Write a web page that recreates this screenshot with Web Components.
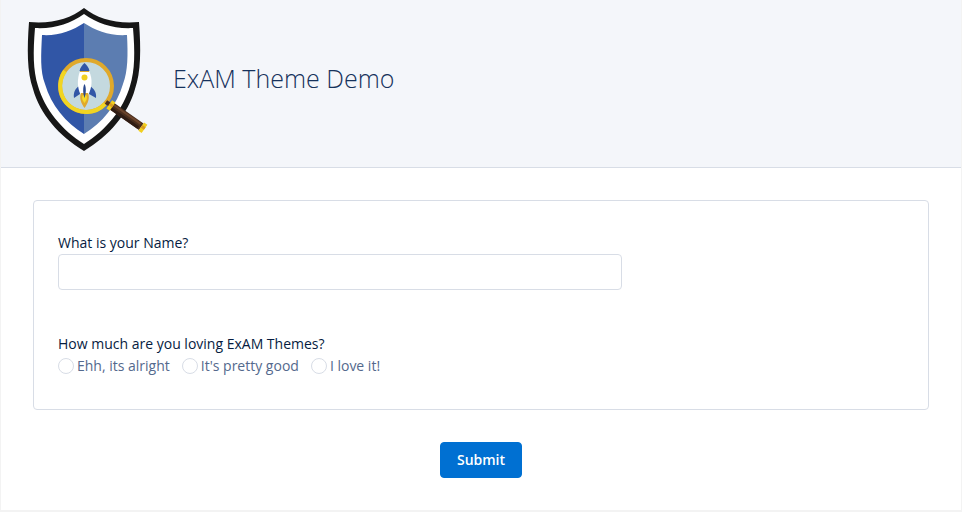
<!DOCTYPE html>
<html lang="en">
<head>
<meta charset="utf-8">
<meta name="viewport" content="width=device-width, initial-scale=1">
<title>ExAM Theme Demo</title>
<style>
  * {
    box-sizing: border-box;
  }

  body {
    margin: 0;
    padding: 0 1px 2px;
    background: #f3f3f3;
    color: #061c3f;
    font: 14px/20px "Open Sans", "Noto Sans", sans-serif;
  }
</style>
</head>
<body>

<exam-page>
  <exam-header slot="header" heading="ExAM Theme Demo">
    <exam-logo></exam-logo>
  </exam-header>
  <exam-panel>
    <exam-text-field label="What is your Name?" name="name"></exam-text-field>
    <exam-radio-group
      label="How much are you loving ExAM Themes?"
      name="rating"
      options="Ehh, its alright|It's pretty good|I love it!"
    ></exam-radio-group>
  </exam-panel>
  <exam-button slot="actions">Submit</exam-button>
</exam-page>

<script>
////////////////////
// Base element
////////////////////

class ExamElement extends HTMLElement {
  constructor() {
    super();
    this.attachShadow({ mode: "open" });
  }

  connectedCallback() {
    this.shadowRoot.innerHTML = `<style>
      *, *::before { box-sizing: border-box; }
      ${this.styles()}
    </style>${this.render()}`;
  }

  styles() {
    return "";
  }

  render() {
    return "<slot></slot>";
  }
}

////////////////////
// Page
////////////////////

class ExamPage extends ExamElement {
  styles() {
    return `
      :host {
        display: block;
        background: #fff;
      }
      main {
        padding: 32px;
      }
      .actions {
        display: flex;
        justify-content: center;
        padding-top: 32px;
      }
    `;
  }

  render() {
    return `
      <slot name="header"></slot>
      <main>
        <slot></slot>
        <div class="actions"><slot name="actions"></slot></div>
      </main>
    `;
  }
}

////////////////////
// Header
////////////////////

class ExamHeader extends ExamElement {
  styles() {
    return `
      :host {
        display: block;
        background: #f4f6fa;
        border-bottom: 1px solid #d8dde6;
      }
      header {
        display: flex;
        align-items: center;
        gap: 12px;
        padding: 0 20px 11px;
      }
      h1 {
        margin: 0;
        color: #16325c;
        font: 300 25px/32px "Open Sans", "Noto Sans", sans-serif;
      }
    `;
  }

  render() {
    return `
      <header>
        <slot></slot>
        <h1>${this.getAttribute("heading")}</h1>
      </header>
    `;
  }
}

////////////////////
// Logo, a shield with a rocket under a magnifying glass
////////////////////

class ExamLogo extends ExamElement {
  styles() {
    return `
      :host {
        display: block;
        flex: none;
      }
      svg {
        display: block;
      }
    `;
  }

  render() {
    return `
      <svg width="140" height="156" viewBox="21 0 140 156" aria-hidden="true">
        <path fill="#171717" d="M84 8C70 19 52 24 29 22C27 49 27 72 33 89C40 114 59 136 84 151C109 136 128 114 135 89C141 72 141 49 139 22C116 24 98 19 84 8Z"/>
        <path fill="#fff" d="M84 14C70 24 54 29 35 28C33 52 33 70 38 86C45 110 62 130 84 144C106 130 123 110 130 86C135 70 135 52 133 28C114 29 98 24 84 14Z"/>
        <path fill="#3156a6" d="M84 23C72 31 58 36 42 35C41 55 40 71 45 84C51 105 66 123 84 134Z"/>
        <path fill="#5c7db1" d="M84 23C96 31 110 36 127 35C128 55 128 71 123 84C117 105 102 123 84 134Z"/>
        <circle cx="86" cy="86" r="26" fill="#c4d9df" stroke="#e0a92b" stroke-width="4"/>
        <path fill="none" stroke="#f1d522" stroke-width="4" d="M65 71A26 26 0 0 0 105 104"/>
        <path fill="#3156a6" d="M79 86C76 88 73 92 74 98L80 94ZM90 86C93 88 97 92 96 98L89 94Z"/>
        <path fill="#fff" d="M80 71H89C93 79 92 88 88 95H81C77 88 77 79 80 71Z"/>
        <path fill="#3156a6" d="M84.500 63C82 65 80 68 79.500 71H89.500C89 68 87 65 84.500 63Z"/>
        <path stroke="#e0a92b" d="M80 71.500H89"/>
        <circle cx="84.500" cy="77.500" r="3" fill="#f1cf20"/>
        <path fill="#e0a92b" d="M81 93C79 98 81 103 84.500 108C88 103 90 98 88 93Z"/>
        <path fill="#f6dc28" d="M83 95C81 98 83 101 84.500 103C86 101 88 98 86 95Z"/>
        <path fill="#29478c" d="M84.500 84C82.500 87 83 94 84.500 98C86 94 86.500 87 84.500 84Z"/>
        <g transform="translate(106 102) rotate(35)">
          <path fill="#4a2e1d" d="M0 -2H5V2H0ZM6 -4H43V4H6Z"/>
          <path fill="#2f1c14" d="M8 1H41V4H8Z"/>
          <path fill="#6c442c" d="M8 -3H41V-1H8Z"/>
          <path fill="#f1cf20" d="M4 -5H8V5H4ZM43 -5H47V5H43Z"/>
          <path fill="#d99d20" d="M4 -2H8V1H4ZM43 -2H47V1H43Z"/>
        </g>
      </svg>
    `;
  }
}

////////////////////
// Panel
////////////////////

class ExamPanel extends ExamElement {
  styles() {
    return `
      :host {
        display: grid;
        gap: 44px;
        padding: 32px 24px 31px;
        border: 1px solid #d8dde6;
        border-radius: 4px;
      }
    `;
  }
}

////////////////////
// Text field
////////////////////

class ExamTextField extends ExamElement {
  styles() {
    return `
      :host {
        display: grid;
        grid-template-columns: 2fr 1fr;
      }
      label {
        grid-column: 1 / -1;
        padding-bottom: 1px;
      }
      input {
        width: 100%;
        height: 36px;
        padding: 0 12px;
        border: 1px solid #d8dde6;
        border-radius: 4px;
        background: #fff;
        color: inherit;
        font: inherit;
      }
      input:focus {
        outline: none;
        border-color: #0070d2;
      }
    `;
  }

  render() {
    const name = this.getAttribute("name");
    return `
      <label for="${name}">${this.getAttribute("label")}</label>
      <input type="text" id="${name}" name="${name}">
    `;
  }
}

////////////////////
// Radio group
////////////////////

class ExamRadioGroup extends ExamElement {
  styles() {
    return `
      :host {
        display: block;
      }
      fieldset {
        margin: 0;
        padding: 0;
        border: 0;
      }
      legend {
        padding: 0;
      }
      .options {
        display: flex;
        flex-wrap: wrap;
        gap: 0 12px;
        color: #54698d;
        line-height: 24px;
      }
      label {
        display: flex;
        align-items: center;
        gap: 3px;
      }
      input {
        appearance: none;
        width: 16px;
        height: 16px;
        margin: 0;
        border: 1px solid #d8dde6;
        border-radius: 50%;
        background: #fff;
      }
      input:checked {
        border: 4px solid #0070d2;
      }
    `;
  }

  render() {
    const name = this.getAttribute("name");
    const options = this.getAttribute("options").split("|");
    return `
      <fieldset>
        <legend>${this.getAttribute("label")}</legend>
        <div class="options">
          ${options
            .map(
              (option, i) => `<label for="${name}-${i}">
                <input type="radio" id="${name}-${i}" name="${name}" value="${option}">
                <span>${option}</span>
              </label>`
            )
            .join("")}
        </div>
      </fieldset>
    `;
  }
}

////////////////////
// Button
////////////////////

class ExamButton extends ExamElement {
  styles() {
    return `
      :host {
        display: block;
      }
      button {
        display: block;
        height: 36px;
        padding: 0 16px;
        border: 1px solid #0070d2;
        border-radius: 4px;
        background: #0070d2;
        color: #fff;
        font: inherit;
        font-weight: 600;
        cursor: pointer;
      }
      button:hover {
        background: #005fb2;
      }
    `;
  }

  render() {
    return `<button type="submit"><slot></slot></button>`;
  }
}

customElements.define("exam-page", ExamPage);
customElements.define("exam-header", ExamHeader);
customElements.define("exam-logo", ExamLogo);
customElements.define("exam-panel", ExamPanel);
customElements.define("exam-text-field", ExamTextField);
customElements.define("exam-radio-group", ExamRadioGroup);
customElements.define("exam-button", ExamButton);
</script>
</body>
</html>
